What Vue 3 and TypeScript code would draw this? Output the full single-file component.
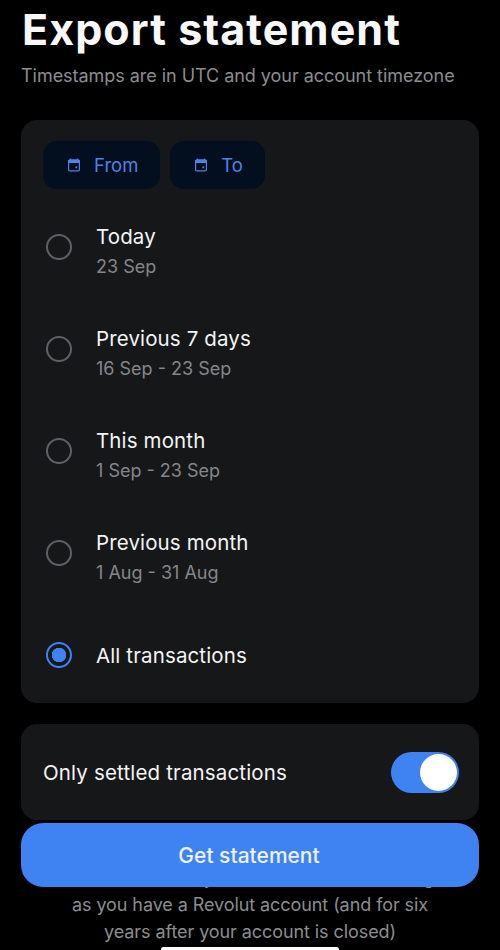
<script setup lang="ts">
interface Period { label: string; sub?: string; selected?: boolean }
const periods: Period[] = [
  { label: 'Today', sub: '23 Sep' },
  { label: 'Previous 7 days', sub: '16 Sep - 23 Sep' },
  { label: 'This month', sub: '1 Sep - 23 Sep' },
  { label: 'Previous month', sub: '1 Aug - 31 Aug' },
  { label: 'All transactions', selected: true },
]
const ranges = ['From', 'To']
</script>

<template>
  <main class="page">
    <h1 class="title">Export statement</h1>
    <p class="subtitle">Timestamps are in UTC and your account timezone</p>

    <section class="card periods">
      <div class="ranges">
        <button v-for="r in ranges" :key="r" class="range">
          <svg class="cal" viewBox="0 0 14 14" width="14" height="14">
            <path d="M1 3.2A1.7 1.7 0 0 1 2.7 1.5h8.6A1.7 1.7 0 0 1 13 3.2V5H1Z" fill="#4f83e6" />
            <path d="M3.5 .6v2M10.5 .6v2" stroke="#4f83e6" stroke-width="1.2" />
            <rect x="1.6" y="2.1" width="10.8" height="10.8" rx="1.2" fill="none" stroke="#4f83e6" stroke-width="1.2" />
            <rect x="8.4" y="8.4" width="1.8" height="1.8" fill="#4f83e6" />
          </svg>
          <span>{{ r }}</span>
        </button>
      </div>
      <div class="options">
        <div v-for="p in periods" :key="p.label" class="option" :class="{ single: !p.sub }">
          <span class="radio" :class="{ on: p.selected }"></span>
          <div class="option-text">
            <div class="option-label">{{ p.label }}</div>
            <div v-if="p.sub" class="option-sub">{{ p.sub }}</div>
          </div>
        </div>
      </div>
    </section>

    <section class="card settled">
      <span class="settled-label">Only settled transactions</span>
      <span class="toggle"><span class="knob"></span></span>
    </section>

    <button class="cta">Get statement</button>

    <p class="footnote">
      You can access your statements for as long<br />
      as you have a Revolut account (and for six<br />
      years after your account is closed)
    </p>
    <div class="home"></div>
  </main>
</template>

<style>
html, body { margin: 0; background: #000; }
</style>

<style scoped>
.page {
  position: relative;
  width: 500px;
  height: 950px;
  overflow: hidden;
  box-sizing: border-box;
  padding: 5px 21px 0;
  background: #000;
  font-family: Inter, "Liberation Sans", sans-serif;
  color: #fff;
}
.title {
  margin: 0;
  font-size: 43px;
  line-height: 48px;
  font-weight: 700;
  letter-spacing: 1.05px;
  white-space: nowrap;
  color: #f8f8f8;
  padding-left: 1px;
}
.subtitle {
  margin: 11px 0 0;
  font-size: 18px;
  line-height: 24px;
  letter-spacing: -0.04px;
  color: #8c8d90;
  white-space: nowrap;
}
.card {
  background: #161719;
  border-radius: 16px;
}
.periods {
  margin-top: 32px;
  height: 583px;
  box-sizing: border-box;
  padding: 21px 22px 0 22px;
}
.ranges { display: flex; gap: 10px; }
.range {
  display: flex;
  align-items: center;
  gap: 13px;
  height: 48px;
  padding: 0 22px 0 24px;
  border: 0;
  border-radius: 14px;
  background: #030e1f;
  color: #4f83e6;
  font: 400 18.5px/24px Inter, "Liberation Sans", sans-serif;
}
.cal { flex: none; }
.options { padding-top: 7px; }
.option {
  display: flex;
  align-items: center;
  gap: 24px;
  height: 102px;
  padding-left: 3px;
}
.radio {
  width: 26px;
  height: 26px;
  flex: none;
  box-sizing: border-box;
  border-radius: 50%;
  border: 2.4px solid #5f6063;
}
.radio.on {
  border-color: #3f82f2;
  background: radial-gradient(circle, #3f82f2 0 7px, transparent 7.5px);
}
.option-text { margin-top: 7px; }
.single .option-text { margin-top: 2px; }
.option-label {
  font-size: 20.5px;
  line-height: 28px;
  font-weight: 400;
  letter-spacing: 0.13px;
  color: #f4f4f5;
}
.option-sub {
  margin-top: 4px;
  font-size: 18px;
  line-height: 24px;
  color: #85868a;
}
.settled {
  margin-top: 21px;
  height: 96px;
  display: flex;
  align-items: center;
  justify-content: space-between;
  padding: 0 20px 0 22px;
  box-sizing: border-box;
}
.settled-label {
  font-size: 20.5px;
  font-weight: 400;
  letter-spacing: 0.16px;
  color: #f4f4f5;
}
.toggle {
  width: 68px;
  height: 41px;
  border-radius: 21px;
  background: #3f82f2;
  display: flex;
  align-items: center;
  justify-content: flex-end;
  padding-right: 2px;
  box-sizing: border-box;
}
.knob {
  width: 37px;
  height: 37px;
  border-radius: 50%;
  background: #fff;
}
.cta {
  position: relative;
  z-index: 1;
  display: block;
  width: 100%;
  height: 64px;
  margin-top: 3px;
  padding: 2px 2px 0 0;
  border: 0;
  border-radius: 22px;
  background: #3f82f2;
  color: #eef4fe;
  font: 500 21px/28px Inter, "Liberation Sans", sans-serif;
}
.footnote {
  margin: -23px 0 0;
  font-size: 18px;
  line-height: 27px;
  letter-spacing: -0.08px;
  color: #8c8d90;
  text-align: center;
  white-space: nowrap;
}
.home {
  position: absolute;
  left: 161px;
  bottom: -2px;
  width: 178px;
  height: 5px;
  border-radius: 3px;
  background: #fff;
}
</style>
